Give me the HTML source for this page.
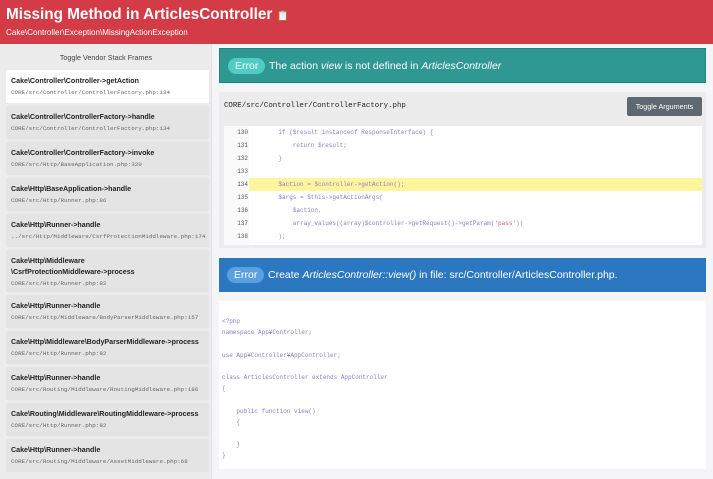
<!DOCTYPE html>
<html><head><meta charset="utf-8"><style>
*{margin:0;padding:0;box-sizing:border-box}
body{width:713px;height:479px;overflow:hidden;background:#f5f5f8;font-family:"Liberation Sans",sans-serif;position:relative}
.hdr{position:absolute;left:0;top:0;width:713px;height:44px;background:#d33c47;color:#fff}
.hdr h1{position:absolute;left:6px;top:6px;font-size:15.3px;font-weight:bold;white-space:nowrap}
.hdr .sub{position:absolute;left:6px;top:28px;font-size:8.1px;white-space:nowrap}
.side{position:absolute;left:0;top:44px;width:212px;height:435px;background:#ececec;border-right:1px solid #e2e2e2}
.tog{position:absolute;left:0;top:53px;width:212px;text-align:center;font-size:7.2px;color:#444}
.it{position:absolute;left:6px;width:203px;background:#e4e4e4;padding:6px 5px 0;white-space:nowrap;overflow:hidden}
.it b{display:block;font-size:7.1px;color:#222;line-height:11px}
.it span{display:block;font-family:"Liberation Mono",monospace;font-size:5.9px;color:#666;margin-top:2px}
.bar{position:absolute;left:219px;width:487px;color:#fff;font-size:10.5px}
.badge{position:absolute;left:8px;border-radius:9px;padding:0 7px;font-size:10.5px;height:16px;line-height:16px}
.mono{font-family:"Liberation Mono",monospace}
.code{position:absolute;left:224px;top:126px;width:478px;height:119px;background:#fff}
.ln{position:absolute;left:0;top:0;width:25px;height:119px;background:#fafafa}
.row{position:absolute;left:0;width:478px;height:13px;font-family:"Liberation Mono",monospace;font-size:6px;line-height:13px}
.row i{font-style:normal;position:absolute;left:6px;width:18px;text-align:right;color:#555}
.row em{font-style:normal;position:absolute;left:40px;color:#8a7fc4;white-space:pre}
.c2{position:absolute;left:219px;top:301px;width:487px;height:168px;background:#fff;font-family:"Liberation Mono",monospace;font-size:6px;line-height:11.2px;color:#8a7fc4;white-space:pre;padding:15px 0 0 3px}
</style></head><body>
<div class="hdr"><h1>Missing Method in ArticlesController <span style="font-size:10px">📋</span></h1><div class="sub">Cake\Controller\Exception\MissingActionException</div></div>
<div class="side"></div>
<div class="tog">Toggle Vendor Stack Frames</div>
<div class="it" style="top:70px;height:33px;background:#fff"><b>Cake\Controller\Controller-&gt;getAction</b><span>CORE/src/Controller/ControllerFactory.php:134</span></div>
<div class="it" style="top:106px;height:33px"><b>Cake\Controller\ControllerFactory-&gt;handle</b><span>CORE/src/Controller/ControllerFactory.php:134</span></div>
<div class="it" style="top:142px;height:33px"><b>Cake\Controller\ControllerFactory-&gt;invoke</b><span>CORE/src/Http/BaseApplication.php:320</span></div>
<div class="it" style="top:178px;height:33px"><b>Cake\Http\BaseApplication-&gt;handle</b><span>CORE/src/Http/Runner.php:86</span></div>
<div class="it" style="top:214px;height:33px"><b>Cake\Http\Runner-&gt;handle</b><span>../src/Http/Middleware/CsrfProtectionMiddleware.php:174</span></div>
<div class="it" style="top:250px;height:42px"><b>Cake\Http\Middleware<br>\CsrfProtectionMiddleware-&gt;process</b><span>CORE/src/Http/Runner.php:82</span></div>
<div class="it" style="top:295px;height:33px"><b>Cake\Http\Runner-&gt;handle</b><span>CORE/src/Http/Middleware/BodyParserMiddleware.php:157</span></div>
<div class="it" style="top:331px;height:33px"><b>Cake\Http\Middleware\BodyParserMiddleware-&gt;process</b><span>CORE/src/Http/Runner.php:82</span></div>
<div class="it" style="top:367px;height:33px"><b>Cake\Http\Runner-&gt;handle</b><span>CORE/src/Routing/Middleware/RoutingMiddleware.php:186</span></div>
<div class="it" style="top:403px;height:33px"><b>Cake\Routing\Middleware\RoutingMiddleware-&gt;process</b><span>CORE/src/Http/Runner.php:82</span></div>
<div class="it" style="top:439px;height:33px"><b>Cake\Http\Runner-&gt;handle</b><span>CORE/src/Routing/Middleware/AssetMiddleware.php:68</span></div>

<div class="bar" style="top:48px;height:35px;background:#2f9893;border:1px solid #23837e"><div class="badge" style="top:9px;background:#4ecdc4">Error</div><div style="position:absolute;left:49px;top:11px">The action <i>view</i> is not defined in <i>ArticlesController</i></div></div>
<div style="position:absolute;left:219px;top:92px;width:487px;height:156px;background:#ececec"></div>
<div class="mono" style="position:absolute;left:224px;top:102px;font-size:7.4px;color:#222">CORE/src/Controller/ControllerFactory.php</div>
<div style="position:absolute;left:627px;top:97px;width:75px;height:19px;background:#5f6870;border-radius:2px;color:#fff;font-size:7.2px;text-align:center;line-height:19px">Toggle Arguments</div>
<div class="code"><div class="ln"></div>
<div class="row" style="top:0"><i>130</i><em>    if ($result instanceof ResponseInterface) {</em></div>
<div class="row" style="top:13px"><i>131</i><em>        return $result;</em></div>
<div class="row" style="top:26px"><i>132</i><em>    }</em></div>
<div class="row" style="top:39px"><i>133</i><em></em></div>
<div class="row" style="top:52px"><div style="position:absolute;left:25px;width:453px;height:13px;background:#fff59d"></div><i>134</i><em>    $action = $controller-&gt;getAction();</em></div>
<div class="row" style="top:65px"><i>135</i><em>    $args = $this-&gt;getActionArgs(</em></div>
<div class="row" style="top:78px"><i>136</i><em>        $action,</em></div>
<div class="row" style="top:91px"><i>137</i><em>        array_values((array)$controller-&gt;getRequest()-&gt;getParam('<span style="color:#d06070">pass</span>'))</em></div>
<div class="row" style="top:104px"><i>138</i><em>    );</em></div>
</div>
<div class="bar" style="top:258px;height:34px;background:#2b78c0"><div class="badge" style="top:9px;background:#5aa0e0">Error</div><div style="position:absolute;left:49px;top:11px">Create <i>ArticlesController::view()</i> in file: src/Controller/ArticlesController.php.</div></div>
<div class="c2">&lt;?php
namespace App¥Controller;

use App¥Controller¥AppController;

class ArticlesController extends AppController
{

    public function view()
    {

    }
}</div>
</body></html>
